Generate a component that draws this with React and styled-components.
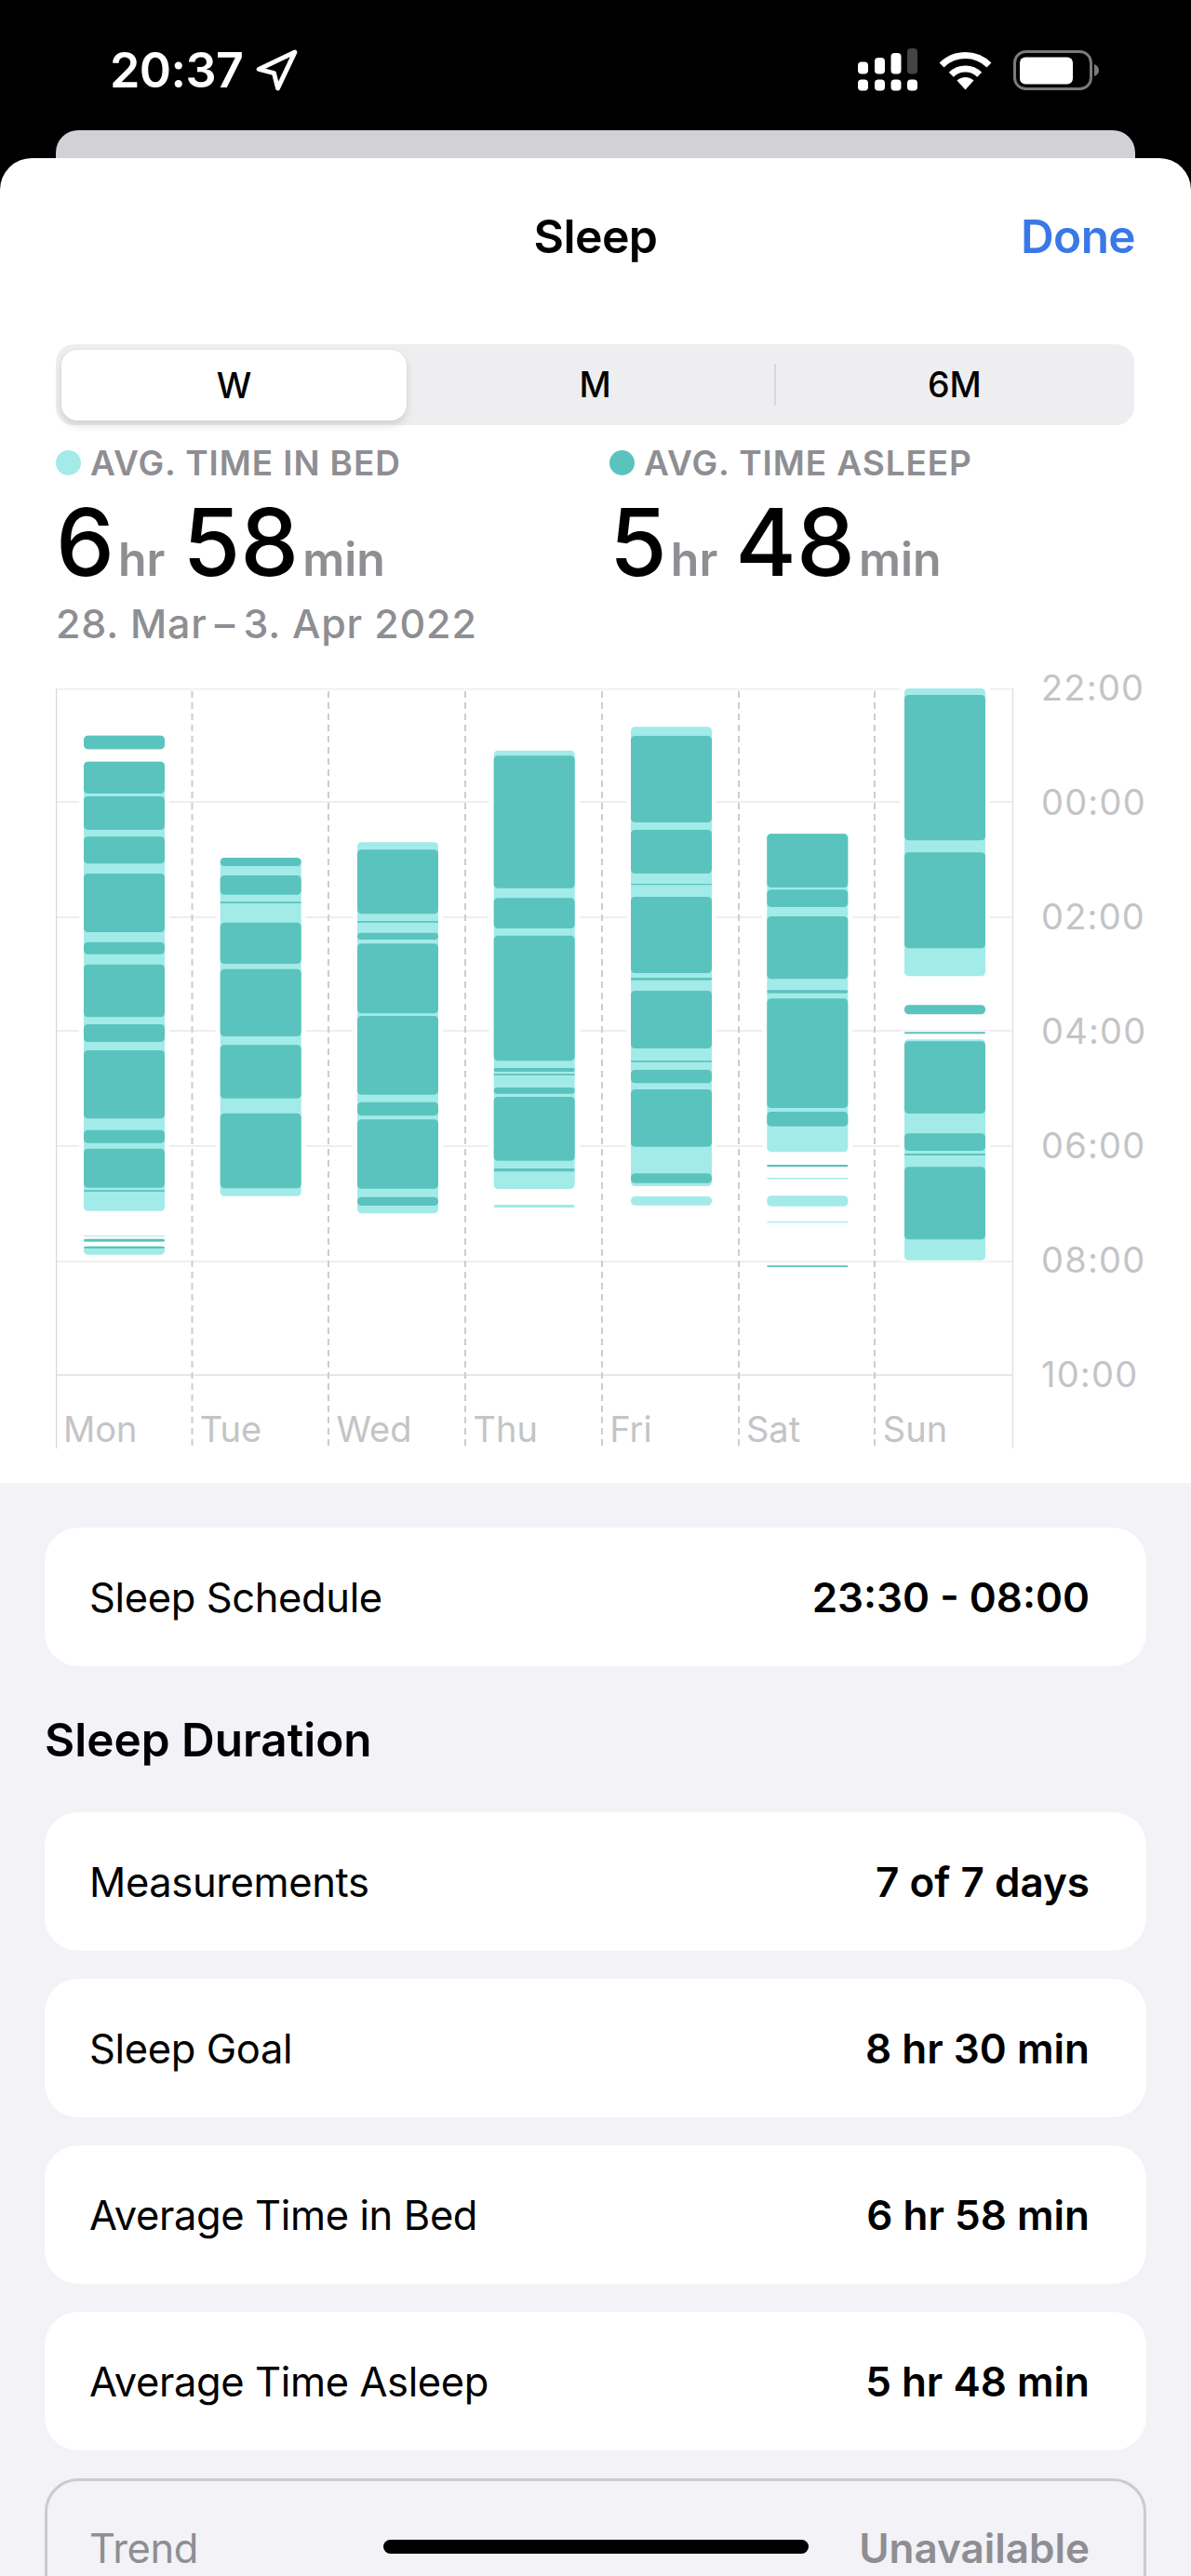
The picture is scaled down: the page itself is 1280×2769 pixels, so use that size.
import React from "react";
import styled, { createGlobalStyle } from "styled-components";
import { Navigation } from "lucide-react";

const Global = createGlobalStyle`
  html, body { margin: 0; padding: 0; background: #000; }
  body { font-family: "Inter", "Noto Sans", sans-serif; -webkit-font-smoothing: antialiased; }
  * { box-sizing: border-box; }
`;

const Screen = styled.div`
  width: 1280px;
  height: 2769px;
  position: relative;
  overflow: hidden;
  background: #000;
`;

const StatusBar = styled.div`
  height: 140px;
  padding: 44px 97px 0 118px;
  display: flex;
  justify-content: space-between;
  align-items: flex-start;
  color: #fff;
`;
const Clock = styled.div`
  display: flex;
  align-items: center;
  font-size: 52px;
  font-weight: 600;
  line-height: 64px;
  letter-spacing: -0.6px;
  gap: 11px;
`;
const LocationIcon = styled(Navigation)`
  margin-top: 1px;
`;
const StatusIcons = styled.div`
  display: flex;
  align-items: flex-start;
  margin-top: 8px;
`;
const BackCard = styled.div`
  height: 30px;
  margin: 0 60px;
  background: #d1d1d6;
  border-radius: 24px 24px 0 0;
`;
const Sheet = styled.div`
  background: #fff;
  border-radius: 34px 34px 0 0;
  height: 1424px;
`;
const Header = styled.header`
  height: 168px;
  padding: 0 60px;
  display: grid;
  grid-template-columns: 1fr auto 1fr;
  align-items: center;
`;
const Title = styled.h1`
  grid-column: 2;
  margin: 0;
  font-size: 50px;
  font-weight: 600;
  color: #000;
  letter-spacing: -0.6px;
`;
const Done = styled.div`
  grid-column: 3;
  justify-self: end;
  font-size: 49.5px;
  font-weight: 600;
  color: #3a78e8;
  letter-spacing: -0.6px;
`;
const Segmented = styled.div`
  margin: 32px 61px 0 60px;
  height: 87px;
  background: #eeeef0;
  border-radius: 20px;
  padding: 6px 0;
  display: grid;
  grid-template-columns: repeat(3, 1fr);
  align-items: stretch;
`;
const Segment = styled.div`
  display: flex;
  align-items: center;
  justify-content: center;
  font-size: 37.5px;
  font-weight: 500;
  color: #000;
  position: relative;
  background: ${(p) => (p.$active ? "#fff" : "transparent")};
  border-radius: ${(p) => (p.$active ? "17px" : "0")};
  box-shadow: ${(p) => (p.$active ? "0 5px 10px rgba(0,0,0,.12), 0 0 2px rgba(0,0,0,.08)" : "none")};
  margin: ${(p) => (p.$active ? "0 9px -1px 6px" : "0")};
  ${(p) =>
    p.$divider &&
    `&::after{content:"";position:absolute;right:-1px;top:15px;bottom:15px;width:2px;background:#d9d9dc;}`}
`;
const Stats = styled.div`
  margin: 20px 0 0 60px;
  display: grid;
  grid-template-columns: 595px 1fr;
`;
const Stat = styled.div`
  display: flex;
  flex-direction: column;
`;
const Legend = styled.div`
  display: flex;
  align-items: center;
  gap: 10px;
  height: 40px;
  font-size: 37px;
  font-weight: 600;
  color: #8e8e93;
  letter-spacing: 0.9px;
`;
const Dot = styled.span`
  width: 27px;
  height: 27px;
  border-radius: 50%;
  background: ${(p) => p.$color};
`;
const BigValue = styled.div`
  margin-top: 5px;
  height: 116px;
  display: flex;
  align-items: baseline;
  font-size: 100px;
  line-height: 122px;
  font-weight: 500;
  color: #000;
  letter-spacing: 0;
`;
const Unit = styled.span`
  font-size: 50px;
  font-weight: 600;
  color: #8e8e93;
  letter-spacing: 0;
  margin: 0 19px 0 4px;
`;
const DateRange = styled.div`
  margin-top: 7px;
  font-size: 43px;
  font-weight: 500;
  line-height: 50px;
  color: #8e8e93;
  letter-spacing: 0.8px;
`;
const Chart = styled.div`
  position: relative;
  margin: 45px 0 0 60px;
  width: 1200px;
  height: 818px;
  display: flex;
`;
const PlotSvg = styled.svg`
  display: block;
  flex: none;
`;
const Axis = styled.div`
  margin: -24px 0 0 29px;
  display: grid;
  grid-auto-rows: 123px;
`;
const AxisLabel = styled.div`
  font-size: 38px;
  line-height: 46px;
  font-weight: 400;
  letter-spacing: 1.2px;
  color: #c4c4c6;
`;
const Days = styled.div`
  position: absolute;
  left: 8px;
  bottom: -1px;
  display: grid;
  grid-template-columns: repeat(7, 146.8px);
`;
const DayLabel = styled.div`
  font-size: 38px;
  line-height: 46px;
  height: 46px;
  color: #c4c4c6;
  font-weight: 400;
`;
const Lower = styled.div`
  background: #f2f2f7;
  padding: 48px 48px 0;
  height: 1175px;
`;
const Card = styled.div`
  height: 149px;
  border-radius: 36px;
  background: ${(p) => (p.$muted ? "transparent" : "#fff")};
  border: ${(p) => (p.$muted ? "3px solid #cbcbcf" : "none")};
  padding: 0 ${(p) => (p.$muted ? "58px" : "61px")} 0 ${(p) => (p.$muted ? "45px" : "48px")};
  display: flex;
  align-items: center;
  justify-content: space-between;
  font-size: 44px;
  color: ${(p) => (p.$muted ? "#8e8e93" : "#000")};
  margin-bottom: 30px;
`;
const Label = styled.span`
  font-weight: 400;
  font-size: 43.5px;
  letter-spacing: -0.38px;
`;
const Value = styled.span`
  font-weight: 600;
`;
const SectionTitle = styled.h2`
  margin: 0;
  height: 127px;
  padding-top: 21px;
  font-size: 49.5px;
  font-weight: 600;
  line-height: 56px;
  color: #000;
`;
const HomeIndicator = styled.div`
  position: absolute;
  left: 412px;
  top: 2730px;
  width: 457px;
  height: 15px;
  border-radius: 8px;
  background: #000;
`;

const DARK = "#5bc3bd";
const LIGHT = "#a2ebe9";
const colX = [30, 176.7, 324, 470.7, 618, 764.3, 912];
const BAR_W = 87;
const grid = [0.5, 122, 246, 368, 492, 616, 738];

const days = [
  {
    blocks: [[50.7, 65.3], [78.7, 561.7], [588, 589], [599.3, 608.7]],
    dark: [[50.7, 65.3], [78.7, 113], [116, 152], [159.3, 188.3], [199, 262], [272.7, 285.7], [296.7, 353.3], [361, 380], [389, 462.3], [474.7, 488.7], [494.7, 536.7], [539.3, 541], [591.7, 594.7], [600, 602]],
  },
  {
    blocks: [[182, 545.7]],
    dark: [[182, 191], [201, 221.7], [229.3, 231], [251.7, 296], [301.7, 374], [383.3, 440.7], [456.7, 537.3]],
  },
  {
    blocks: [[165.3, 564.3]],
    dark: [[173.3, 242.3], [250, 251.7], [262.7, 270], [274.3, 349.3], [352, 436.7], [444.7, 459.3], [463.3, 537.7], [546.7, 556]],
  },
  {
    blocks: [[66.7, 538], [555, 558.3]],
    dark: [[72.3, 214.7], [225.3, 258], [265.7, 400.3], [408, 412], [414.3, 416], [429, 435.7], [439, 507.7], [516, 519.3]],
  },
  {
    blocks: [[41.3, 535], [546, 555.7]],
    dark: [[51, 144], [152, 199], [210, 211.3], [224, 306], [311, 313.7], [325, 387], [400, 401.7], [410, 424.3], [431, 492.7], [521.3, 531.7]],
  },
  {
    blocks: [[156.3, 498.3], [526, 527.5], [545.3, 556.7], [573, 574.3]],
    dark: [[156.3, 214], [216.3, 235], [245, 312.3], [324.3, 327.7], [333.3, 451], [455, 470.7], [512, 514.3], [620.3, 622]],
  },
  {
    blocks: [[0, 309.3], [377.3, 614.7]],
    dark: [[7, 163.3], [176.3, 279.3], [340.3, 350.3], [369.3, 371.3], [379.3, 457], [478.3, 497], [500, 502], [514.3, 592.3]],
  },
];

function Seg({ x, r, fill }) {
  const h = r[1] - r[0];
  return <rect x={x} y={r[0]} width={BAR_W} height={h} rx={Math.min(4.5, h / 2)} fill={fill} />;
}

function Plot() {
  return (
    <PlotSvg width="1030" height="818" viewBox="0 0 1030 818">
      {grid.map((y, i) => (
        <line key={y} x1="0" x2="1029" y1={y} y2={y} stroke={i === 6 ? "#e6e6e8" : "#eeeef0"} strokeWidth="2" />
      ))}
      <line x1="0.5" x2="0.5" y1="0" y2="817" stroke="#d8d8dc" strokeWidth="1.5" />
      <line x1="1028.5" x2="1028.5" y1="0" y2="817" stroke="#e2e2e5" strokeWidth="1.5" />
      {[146.5, 293, 440, 587, 734, 880].map((x) => (
        <line key={x} x1={x} x2={x} y1="3" y2="817" stroke="#cdcdd0" strokeWidth="2" strokeDasharray="7 5" />
      ))}
      {days.map((d, i) => (
        <g key={i}>
          {d.blocks.concat(d.dark).map((r, j) => (
            <rect key={j} x={colX[i] - 5} y={r[0] - 1} width={BAR_W + 10} height={r[1] - r[0] + 2} fill="#fff" />
          ))}
          {d.blocks.map((r, j) => (
            <Seg key={j} x={colX[i]} r={r} fill={LIGHT} />
          ))}
          {d.dark.map((r, j) => (
            <Seg key={j} x={colX[i]} r={r} fill={DARK} />
          ))}
        </g>
      ))}
    </PlotSvg>
  );
}

function Signal() {
  const xs = [0, 18, 35.5, 53];
  const tops = [14.5, 10, 5, 0];
  return (
    <svg width="66" height="46" viewBox="0 0 66 46" style={{ display: "block" }}>
      {xs.map((x, i) => (
        <rect key={i} x={x} y={tops[i]} width="11" height={27.5 - tops[i]} rx="4" fill={i === 3 ? "#444" : "#fff"} />
      ))}
      {xs.map((x) => (
        <rect key={x} x={x} y="33.5" width="11" height="12" rx="4" fill="#fff" />
      ))}
    </svg>
  );
}

function Wifi() {
  const arc = (r) => {
    const a = r * Math.SQRT1_2;
    return `M${28.5 - a} ${40.5 - a}A${r} ${r} 0 0 1 ${28.5 + a} ${40.5 - a}`;
  };
  return (
    <svg width="57" height="42" viewBox="0 0 57 42" style={{ display: "block", margin: "3px 0 0 21px" }}>
      <path d={arc(36)} fill="none" stroke="#fff" strokeWidth="7" />
      <path d={arc(21.5)} fill="none" stroke="#fff" strokeWidth="7" />
      <path d="M28.5 41.500L19.500 31.500A13 13 0 0 1 37.500 31.500Z" fill="#fff" />
    </svg>
  );
}

function Battery() {
  return (
    <svg width="94" height="44" viewBox="0 0 94 44" style={{ display: "block", margin: "2px 0 0 23px" }}>
      <rect x="1.5" y="1.5" width="82" height="40" rx="12" fill="none" stroke="#7a7a7a" strokeWidth="3" />
      <rect x="7" y="7.5" width="57" height="29" rx="6" fill="#fff" />
      <path d="M87 15c3 1 5 3.500 5 6.500s-2 5.500-5 6.500z" fill="#7a7a7a" />
    </svg>
  );
}

const rows = [
  ["Measurements", "7 of 7 days"],
  ["Sleep Goal", "8 hr 30 min"],
  ["Average Time in Bed", "6 hr 58 min"],
  ["Average Time Asleep", "5 hr 48 min"],
];

function Duration({ a, b }) {
  return (
    <BigValue>
      {a}
      <Unit>hr</Unit>
      {b}
      <Unit>min</Unit>
    </BigValue>
  );
}

export default function App() {
  return (
    <Screen>
      <Global />
      <StatusBar>
        <Clock>
          20:37
          <LocationIcon size={49} color="#fff" strokeWidth={2.4} />
        </Clock>
        <StatusIcons>
          <Signal />
          <Wifi />
          <Battery />
        </StatusIcons>
      </StatusBar>
      <BackCard />
      <Sheet>
        <Header>
          <Title>Sleep</Title>
          <Done>Done</Done>
        </Header>
        <Segmented>
          <Segment $active>W</Segment>
          <Segment $divider>M</Segment>
          <Segment>6M</Segment>
        </Segmented>
        <Stats>
          <Stat>
            <Legend>
              <Dot $color={LIGHT} />
              AVG. TIME IN BED
            </Legend>
            <Duration a="6" b="58" />
            <DateRange>28. Mar{"\u2009"}–{"\u2009"}3. Apr 2022</DateRange>
          </Stat>
          <Stat>
            <Legend>
              <Dot $color={DARK} />
              AVG. TIME ASLEEP
            </Legend>
            <Duration a="5" b="48" />
          </Stat>
        </Stats>
        <Chart>
          <Plot />
          <Axis>
            {["22:00", "00:00", "02:00", "04:00", "06:00", "08:00", "10:00"].map((t) => (
              <AxisLabel key={t}>{t}</AxisLabel>
            ))}
          </Axis>
          <Days>
            {["Mon", "Tue", "Wed", "Thu", "Fri", "Sat", "Sun"].map((d) => (
              <DayLabel key={d}>{d}</DayLabel>
            ))}
          </Days>
        </Chart>
      </Sheet>
      <Lower>
        <Card>
          <Label>Sleep Schedule</Label>
          <Value>23:30 - 08:00</Value>
        </Card>
        <SectionTitle>Sleep Duration</SectionTitle>
        {rows.map(([l, v]) => (
          <Card key={l}>
            <Label>{l}</Label>
            <Value>{v}</Value>
          </Card>
        ))}
        <Card $muted>
          <Label>Trend</Label>
          <Value>Unavailable</Value>
        </Card>
      </Lower>
      <HomeIndicator />
    </Screen>
  );
}
